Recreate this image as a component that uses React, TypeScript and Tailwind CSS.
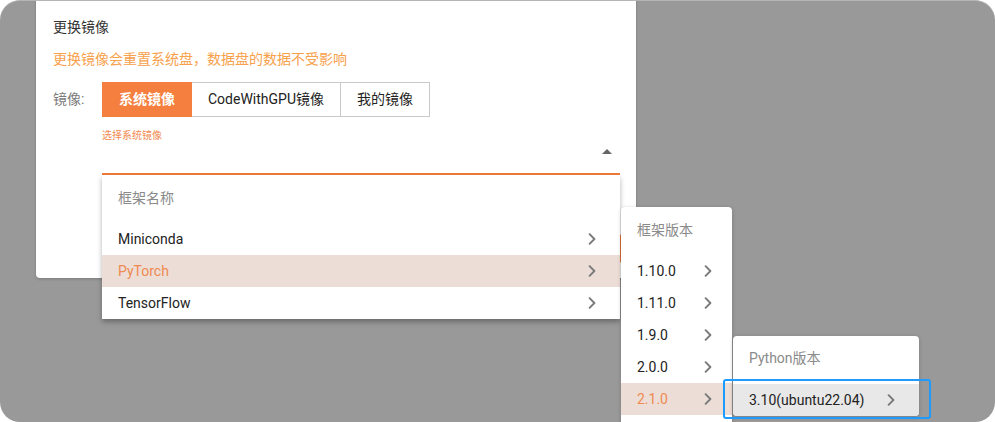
const font = "font-['Roboto','Noto_Sans_CJK_SC',sans-serif]";

function Chevron() {
  return (
    <svg width="8" height="12" viewBox="0 0 8 12" fill="none" className="shrink-0">
      <path d="M1.6 1.2 L6.4 6 L1.6 10.8" stroke="#7a7a7a" strokeWidth="1.9" strokeLinecap="round" strokeLinejoin="round" />
    </svg>
  );
}

const frameworks = ["Miniconda", "PyTorch", "TensorFlow"];
const versions = ["1.10.0", "1.11.0", "1.9.0", "2.0.0", "2.1.0"];

export default function App() {
  return (
    <div className={`w-[995px] h-[422px] bg-white ${font}`}>
      <div className="relative w-full h-full rounded-[20px] bg-[#999999] overflow-hidden border-t border-[#b5b5b5]">
        {/* dialog */}
        <div className="ml-[36px] -mt-[10px] w-[600px] h-[287px] rounded-b bg-white pl-[17px] pt-[26px] flex flex-col shadow-[0_1px_3px_rgba(0,0,0,0.2)]">
          <div className="text-[14px] leading-[20px] text-[#333]">更换镜像</div>
          <div className="mt-[12px] text-[14px] leading-[20px] text-[#f7a14c]">
            更换镜像会重置系统盘，数据盘的数据不受影响
          </div>
          <div className="mt-[13px] flex items-center">
            <span className="w-[49px] text-[14px] text-[#7a7a7a]">镜像:</span>
            <div className="flex h-[35px] text-[14px]">
              <div className="w-[90px] flex items-center justify-center bg-[#f47f3e] text-white font-bold">系统镜像</div>
              <div className="w-[149px] flex items-center justify-center border border-l-0 border-[#c9c9c9] text-[#222]">CodeWithGPU镜像</div>
              <div className="w-[89px] flex items-center justify-center border border-l-0 border-[#c9c9c9] text-[#222]">我的镜像</div>
            </div>
          </div>
          <div className="ml-[49px] mt-[12px] w-[518px] border-b-2 border-[#ef7b3a]">
            <div className="text-[10px] leading-[14px] text-[#f08a52]">选择系统镜像</div>
            <div className="flex justify-end pr-[8px] h-[30px] pt-[6px]">
              <div className="w-0 h-0 border-l-[5px] border-r-[5px] border-b-[5px] border-l-transparent border-r-transparent border-b-[#666]" />
            </div>
          </div>
          <div className="flex justify-end pr-[14px] mt-[59px]">
            <div className="w-[60px] h-[29px] rounded bg-[#f47f3e]" />
          </div>
        </div>

        {/* framework menu */}
        <div className="absolute left-[102px] top-[174px] w-[518px] bg-white shadow-[0_3px_5px_rgba(0,0,0,0.3)]">
          <div className="h-[48px] pl-[16px] pt-[13px] text-[14px] leading-[20px] text-[#8a8a8a]">框架名称</div>
          {frameworks.map((f) => (
            <div
              key={f}
              className={`h-[32px] pl-[16px] pr-[24px] flex items-center justify-between text-[14px] ${
                f === "PyTorch" ? "bg-[#ecddd6] text-[#f08a52]" : "text-[#222]"
              }`}
            >
              <span>{f}</span>
              <Chevron />
            </div>
          ))}
        </div>

        {/* version menu */}
        <div className="absolute left-[621px] top-[206px] w-[111px] h-[230px] rounded bg-white shadow-[0_1px_4px_rgba(0,0,0,0.2)]">
          <div className="h-[48px] pl-[16px] pt-[13px] text-[14px] leading-[20px] text-[#8a8a8a]">框架版本</div>
          {versions.map((v) => (
            <div
              key={v}
              className={`h-[32px] pl-[16px] pr-[20px] flex items-center justify-between text-[14px] ${
                v === "2.1.0" ? "bg-[#ecddd6] text-[#f08a52]" : "text-[#222]"
              }`}
            >
              <span>{v}</span>
              <Chevron />
            </div>
          ))}
        </div>

        {/* python menu */}
        <div className="absolute left-[733px] top-[335px] w-[186px] rounded bg-white shadow-[0_1px_4px_rgba(0,0,0,0.2)] overflow-hidden">
          <div className="h-[48px] pl-[16px] pt-[12px] text-[14px] leading-[20px] text-[#8a8a8a]">Python版本</div>
          <div className="h-[32px] pl-[16px] pr-[24px] flex items-center justify-between text-[14px] bg-[#e8e8e8] text-[#222]">
            <span>3.10(ubuntu22.04)</span>
            <Chevron />
          </div>
        </div>

        {/* focus outline */}
        <div className="absolute left-[723px] top-[378px] w-[208px] h-[40px] rounded-[3px] border-2 border-[#1e9bff]" />
      </div>
    </div>
  );
}
